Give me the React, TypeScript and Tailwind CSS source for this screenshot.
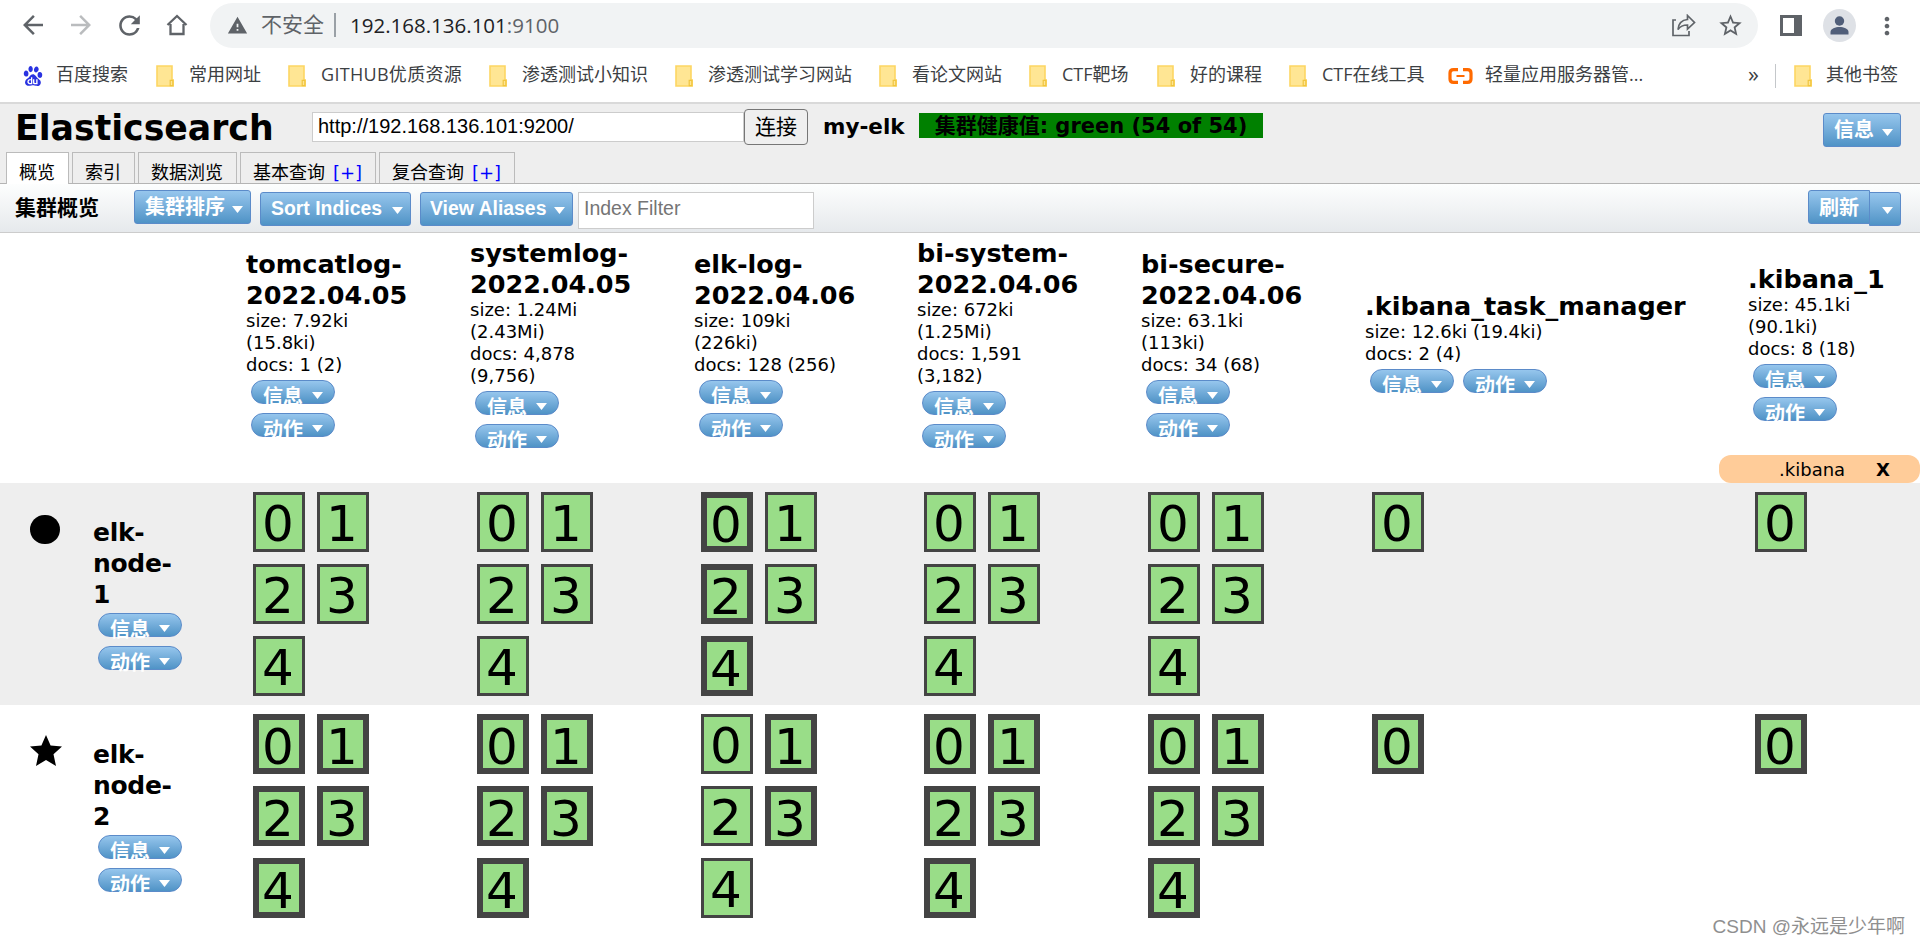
import { MdArrowBack, MdArrowForward, MdRefresh, MdWarning, MdStarBorder, MdMoreVert } from "react-icons/md"
import { SiBaidu } from "react-icons/si"
import clsx from "clsx"

const bookmarks = [
  { title: "常用网址", width: "w-[132px]" },
  { title: "GITHUB优质资源", width: "w-[201px]", tracking: "tracking-[0.3px]" },
  { title: "渗透测试小知识", width: "w-[186px]" },
  { title: "渗透测试学习网站", width: "w-[204px]" },
  { title: "看论文网站", width: "w-[150px]" },
  { title: "CTF靶场", width: "w-[128px]" },
  { title: "好的课程", width: "w-[132px]" },
  { title: "CTF在线工具", width: "w-[159px]" },
]

const tabs = [
  { label: "概览", width: "w-[63px]", active: true },
  { label: "索引", width: "w-[63px]" },
  { label: "数据浏览", width: "w-[99px]" },
  { label: "基本查询", width: "w-[136px]", plus: true },
  { label: "复合查询", width: "w-[136px]", plus: true },
]

const indices = [
  { name: ["tomcatlog-", "2022.04.05"], info: ["size: 7.92ki", "(15.8ki)", "docs: 1 (2)"], pad: "pt-[16px]" },
  { name: ["systemlog-", "2022.04.05"], info: ["size: 1.24Mi", "(2.43Mi)", "docs: 4,878", "(9,756)"], pad: "pt-[5px]" },
  { name: ["elk-log-", "2022.04.06"], info: ["size: 109ki", "(226ki)", "docs: 128 (256)"], pad: "pt-[16px]" },
  { name: ["bi-system-", "2022.04.06"], info: ["size: 672ki", "(1.25Mi)", "docs: 1,591", "(3,182)"], pad: "pt-[5px]" },
  { name: ["bi-secure-", "2022.04.06"], info: ["size: 63.1ki", "(113ki)", "docs: 34 (68)"], pad: "pt-[16px]" },
  { name: [".kibana_task_manager"], info: ["size: 12.6ki (19.4ki)", "docs: 2 (4)"], pad: "pt-[58px]", row: true },
  { name: [".kibana_1"], info: ["size: 45.1ki", "(90.1ki)", "docs: 8 (18)"], pad: "pt-[31px]", alias: ".kibana" },
]

// primary[i] lists the shards of index i that are primaries on the node
const nodes = [
  { name: ["elk-", "node-", "1"], master: false, primary: [[], [], [0, 2, 4], [], [], [], []] },
  {
    name: ["elk-", "node-", "2"],
    master: true,
    primary: [[0, 1, 2, 3, 4], [0, 1, 2, 3, 4], [1, 3], [0, 1, 2, 3, 4], [0, 1, 2, 3, 4], [0], [0]],
  },
]

const shardCounts = [5, 5, 5, 5, 5, 1, 1]

const columns = "grid grid-cols-[82px_159px_224px_224px_223px_224px_224px_383px_177px]"
const blue = "border border-[#5b8bc9] bg-gradient-to-b from-[#96c6ed] to-[#4f93c6] text-white font-bold"

function Folder() {
  return (
    <svg width="18" height="22" viewBox="0 0 18 22" className="shrink-0">
      <path d="M1 1h15v14h1.2v6H1z" fill="#ffe694" stroke="#fdd663" strokeWidth="1.6" />
      <path d="M14.2 20.6v-5.2h2.6v5.2z" fill="#ffe694" stroke="#f0c540" strokeWidth="1.2" />
    </svg>
  )
}

function Arrow() {
  return (
    <svg width="11" height="7" viewBox="0 0 11 7" className="shrink-0">
      <path d="M0 0h11L5.5 7z" fill="#fff" />
    </svg>
  )
}

function Button({ label, cjk, className }: { label: string; cjk?: boolean; className?: string }) {
  return (
    <div
      className={clsx(
        blue,
        "flex h-[34px] items-center justify-between rounded-[3px] pr-[7px] pl-[10px]",
        cjk ? "text-[20px] leading-[34px]" : "pb-[2px] text-[19.4px] leading-[30px]",
        className
      )}
    >
      <span>{label}</span>
      <span className="pt-1">
        <Arrow />
      </span>
    </div>
  )
}

function Pill({ label }: { label: string }) {
  return (
    <div className={clsx(blue, "flex h-6 w-[84px] items-start rounded-full pl-[11px] text-[20px] leading-[32px]")}>
      <span>{label}</span>
      <span className="ml-[9px] flex h-[29px] items-center">
        <Arrow />
      </span>
    </div>
  )
}

function Pills({ row }: { row?: boolean }) {
  return (
    <div className={clsx("flex gap-[9px] pl-1", row ? "flex-row" : "flex-col")}>
      <Pill label="信息" />
      <Pill label="动作" />
    </div>
  )
}

function Shard({ id, primary }: { id: number; primary: boolean }) {
  return (
    <div
      className={clsx(
        "h-[60px] w-[52px] border-[#444] bg-[#99dd88] text-[50px]",
        primary ? "border-[6px] pl-[3px] leading-[54px]" : "border-[3px] pl-[6px] leading-[58px]"
      )}
    >
      {id}
    </div>
  )
}

export default function App() {
  return (
    <div className="flex h-[946px] w-[1920px] flex-col overflow-hidden bg-white font-['DejaVu_Sans','Noto_Sans_CJK_SC',sans-serif] whitespace-nowrap text-black">
      {/* Browser toolbar */}
      <div className="flex h-[51px] shrink-0 items-center font-['Open_Sans','Noto_Sans_CJK_SC',sans-serif] text-[#5f6368]">
        <div className="flex w-[210px] items-center pb-px pl-[18px]">
          <MdArrowBack size={30} />
          <MdArrowForward size={30} className="ml-[18px] text-[#babcbe]" />
          <MdRefresh size={31} className="ml-[18px]" />
          <svg width="22" height="22" viewBox="0 0 22 22" className="ml-[21px]">
            <path d="M1.5 11L11 2l9.500 9M4.500 10v10h13V10" fill="none" stroke="currentColor" strokeWidth="2.300" />
          </svg>
        </div>
        <div className="flex h-[45px] w-[1548px] items-center rounded-full bg-[#f1f3f4] pb-px pl-[17px]">
          <MdWarning size={21} />
          <span className="ml-[13px] pb-[2px] text-[21px] leading-[40px]">不安全</span>
          <div className="ml-[10px] h-6 w-[2px] bg-[#9aa0a6]" />
          <span className="ml-[14px] pb-px text-[20.500px] leading-[40px]">
            <span className="text-[#202124]">192.168.136.101</span>:9100
          </span>
          <svg width="24" height="23" viewBox="0 0 24 23" className="mr-[21px] ml-auto">
            <path d="M4 6H1v15.500h16V17" fill="none" stroke="currentColor" strokeWidth="1.700" />
            <path d="M15.500 1.500l7 7-7 6.500v-4c-5 0-7.500 1.500-9.500 4.500.5-6 4-9.500 9.500-10z" fill="none" stroke="currentColor" strokeWidth="1.700" />
          </svg>
          <MdStarBorder size={27} className="mr-[14px]" />
        </div>
        <div className="ml-[22px] h-[21px] w-[22px] border-[3px] border-r-8 border-[#5f6368]" />
        <svg width="33" height="33" viewBox="0 0 33 33" className="ml-[21px]">
          <circle cx="16.500" cy="16.500" r="16.500" fill="#dee1e6" />
          <circle cx="16.500" cy="12" r="4.700" fill="#505e79" />
          <path d="M7.500 25.500v-2.500c0-3.500 5-5 9-5s9 1.500 9 5v2.500z" fill="#505e79" />
        </svg>
        <MdMoreVert size={28} className="ml-[17px]" />
      </div>

      {/* Bookmarks bar */}
      <div className="flex h-[51px] shrink-0 items-center pl-[23px] font-['Open_Sans','Noto_Sans_CJK_SC',sans-serif] text-[18px] leading-[30px] text-[#3c4043]">
        <div className="flex w-[133px] items-center gap-[13px] pb-[2px]">
          <SiBaidu size={20} className="text-[#2932e1]" />
          <span className="pb-[3px]">百度搜索</span>
        </div>
        {bookmarks.map((b) => (
          <div key={b.title} className={clsx("flex shrink-0 items-center gap-[15px] pb-[2px]", b.width)}>
            <Folder />
            <span className={clsx("pb-[3px]", b.tracking)}>{b.title}</span>
          </div>
        ))}
        <div className="flex items-center gap-[12px] pb-[2px]">
          <svg width="25" height="16" viewBox="0 0 25 16">
            <path d="M10 1.600H5.500Q2 1.600 2 5v6q0 3.400 3.500 3.400H10M15 1.600h4.500Q23 1.600 23 5v6q0 3.400-3.500 3.400H15" fill="none" stroke="#ff6a00" strokeWidth="3.200" />
            <path d="M8.500 8h8" stroke="#ff6a00" strokeWidth="2" />
          </svg>
          <span className="pb-[3px]">轻量应用服务器管...</span>
        </div>
        <div className="ml-auto flex w-[172px] items-center pb-[2px]">
          <span className="w-[27px] pb-[5px] text-[22px] leading-[26px]">»</span>
          <div className="mr-[18px] h-6 w-px bg-[#c4c7ca]" />
          <Folder />
          <span className="ml-[14px] pb-[3px]">其他书签</span>
        </div>
      </div>

      {/* Cluster header */}
      <div className="flex h-[82px] shrink-0 flex-col justify-between border-t-2 border-b border-t-[#d9d9d9] border-b-[#b4b4b4] bg-[#eee]">
        <div className="flex h-[44px] items-start pl-[15px]">
          <h1 className="w-[297px] pt-[3px] text-[34.700px] leading-[42px] font-bold">Elasticsearch</h1>
          <div className="mt-2 h-[30px] w-[432px] border border-[#ccc] bg-white pl-[5px] font-['Liberation_Sans',sans-serif] text-[20px] leading-[27px]">
            http://192.168.136.101:9200/
          </div>
          <div className="mt-[5px] h-[36px] w-16 rounded-[4px] border border-[#767676] bg-[#efefef] text-center text-[21px] leading-[35px]">连接</div>
          <span className="ml-[15px] w-[96px] pt-[6px] text-[21.500px] leading-[34px] font-bold">my-elk</span>
          <div className="mt-[9px] h-[25px] w-[344px] bg-[#008000] text-center text-[21px] leading-[27px] font-bold">
            集群健康值: green (54 of 54)
          </div>
          <Button label="信息" cjk className="mt-[9px] mr-[19px] ml-auto w-[78px]" />
        </div>
        <div className="flex h-[31px] gap-[3px] pl-[6px] text-[18px] leading-[39px]">
          {tabs.map((t) => (
            <div
              key={t.label}
              className={clsx("flex justify-center gap-[8px] border border-b-0 border-[#bbb]", t.width, t.active ? "-mb-px bg-white pr-[1px]" : "pr-[1px]")}
            >
              {t.label}
              {t.plus && <span className="text-[#0000ff]">[+]</span>}
            </div>
          ))}
        </div>
      </div>

      {/* Overview toolbar */}
      <div className="flex h-[49px] shrink-0 items-start border-b border-[#ccc] bg-gradient-to-b from-[#fdfefe] to-[#e6e9ec] font-['Liberation_Sans','Noto_Sans_CJK_SC',sans-serif]">
        <h2 className="w-[134px] pt-[7px] pl-[15px] text-[21px] leading-[34px] font-bold">集群概览</h2>
        <Button label="集群排序" cjk className="mt-[6px] w-[117px]" />
        <Button label="Sort Indices" className="mt-2 ml-[9px] w-[151px]" />
        <Button label="View Aliases" className="mt-2 ml-[9px] w-[153px] !pl-[9px]" />
        <div className="mt-2 ml-[5px] h-[37px] w-[236px] border border-[#ccc] bg-white pl-[5px] text-[19.500px] leading-[31px] text-[#757575]">Index Filter</div>
        <div className={clsx(blue, "mt-[6px] ml-auto h-[34px] w-[62px] rounded-l-[3px] text-center text-[20px] leading-[34px]")}>刷新</div>
        <div className={clsx(blue, "mt-2 mr-[19px] -ml-px flex h-[34px] w-8 items-center justify-end rounded-r-[3px] pt-[2px] pr-[7px]")}>
          <Arrow />
        </div>
      </div>

      {/* Index headers */}
      <div className={clsx(columns, "h-[250px] shrink-0")}>
        <div className="col-span-2" />
        {indices.map((index) => (
          <div key={index.name.join("")} className={clsx("relative pl-[6px]", index.pad)}>
            <div className="-mb-px -ml-px text-[25.500px] leading-[31px] font-bold">
              {index.name.map((line) => (
                <div key={line}>{line}</div>
              ))}
            </div>
            <div className="mb-1 -ml-px text-[18px] leading-[22px]">
              {index.info.map((line) => (
                <div key={line}>{line}</div>
              ))}
            </div>
            <Pills row={index.row} />
            {index.alias && (
              <div className="absolute right-0 bottom-0 flex h-7 w-[201px] items-center justify-end rounded-[12px] bg-[#ffcc99] pr-[30px] text-[18px]">
                {index.alias}
                <b className="ml-[31px]">X</b>
              </div>
            )}
          </div>
        ))}
      </div>

      {/* Nodes */}
      {nodes.map((node) => (
        <div key={node.name.join("")} className={clsx(columns, "h-[222px] shrink-0", !node.master && "bg-[#eee]")}>
          <div className="pt-[30px] pl-[30px]">
            {node.master ? (
              <svg width="32" height="31" viewBox="0 0 32 31">
                <path d="M16 0l4.600 10.500L32 11.500l-8.500 7.800L26 31l-10-6-10 6 2.500-11.700L0 11.500l11.400-1z" />
              </svg>
            ) : (
              <div className="mt-[2px] h-[29px] w-[30px] rounded-full bg-black" />
            )}
          </div>
          <div className="pt-[34px] pl-3">
            <div className="mb-[3px] -ml-px text-[25px] leading-[31px] font-bold tracking-[-0.3px]">
              {node.name.map((line) => (
                <div key={line}>{line}</div>
              ))}
            </div>
            <Pills />
          </div>
          {shardCounts.map((count, i) => (
            <div key={i} className="grid grid-cols-[52px_52px] content-start gap-3 pt-[9px] pl-3">
              {Array.from({ length: count }, (_, id) => (
                <Shard key={id} id={id} primary={node.primary[i].includes(id)} />
              ))}
            </div>
          ))}
        </div>
      ))}

      <div className="-mt-[13px] mr-[15px] self-end font-['Liberation_Sans','Noto_Sans_CJK_SC',sans-serif] text-[19px] leading-[26px] text-[#8f8f8f]">CSDN @永远是少年啊</div>
    </div>
  )
}
